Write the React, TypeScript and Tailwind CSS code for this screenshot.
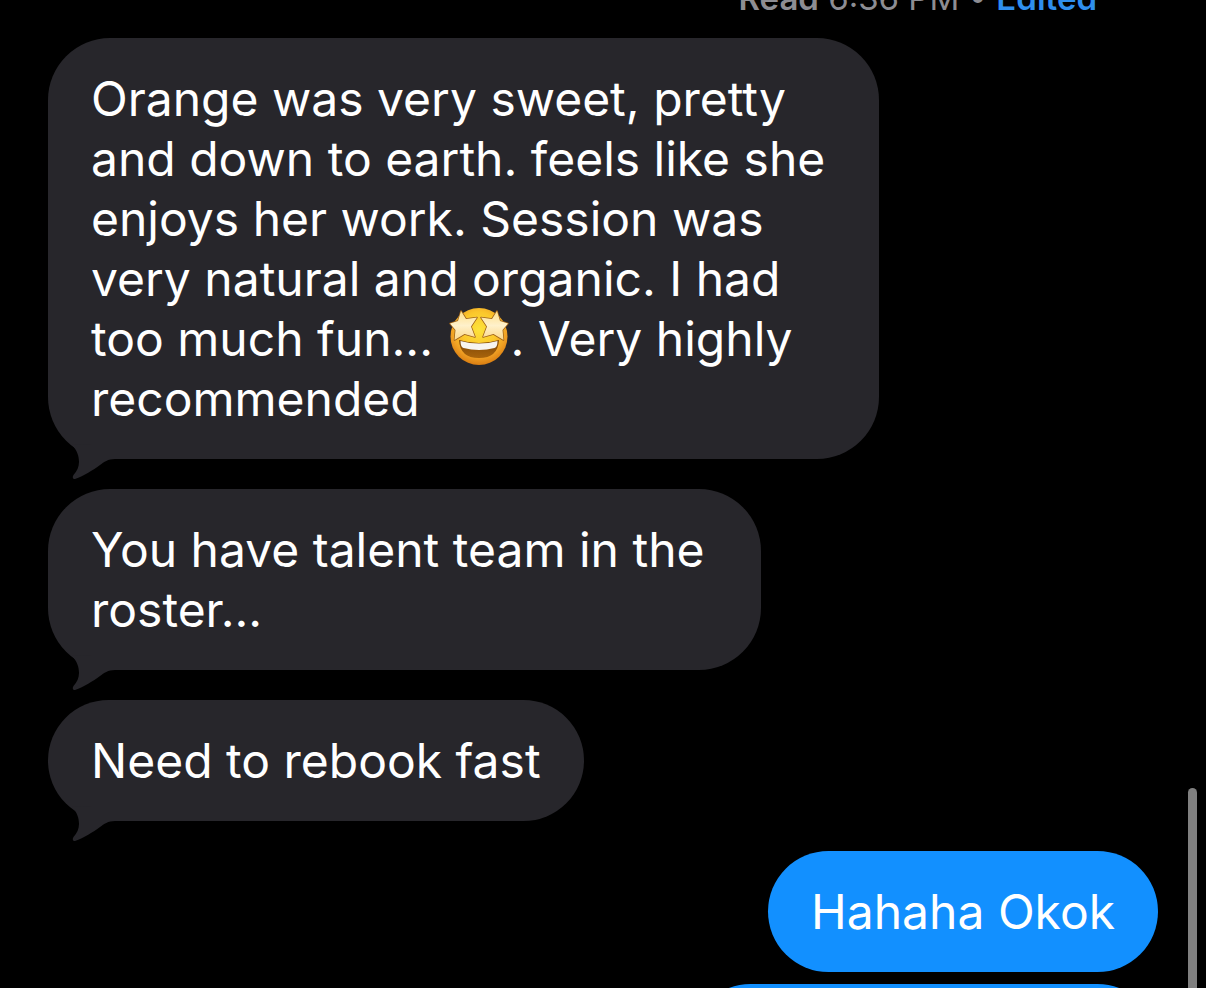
import type { ReactNode } from "react";
import clsx from "clsx";

const StarEyes = () => (
    <svg
        viewBox="0 0 60 58"
        role="img"
        aria-label="Star-struck face"
        className="inline-block w-[60px] h-[58px] -mt-6 -mb-3 mx-0.5"
    >
        <defs>
            <radialGradient id="face" cx="50%" cy="38%" r="62%">
                <stop offset="0" stopColor="#fde33a" />
                <stop offset="0.5" stopColor="#fbc72c" />
                <stop offset="0.78" stopColor="#f0a024" />
                <stop offset="1" stopColor="#d97d12" />
            </radialGradient>
            <linearGradient id="star" x1="0" y1="0" x2="0" y2="1">
                <stop offset="0" stopColor="#ffe089" />
                <stop offset="0.5" stopColor="#fff1cb" />
                <stop offset="1" stopColor="#fbd88a" />
            </linearGradient>
            <linearGradient id="mouth" x1="0" y1="0" x2="0" y2="1">
                <stop offset="0" stopColor="#7a4406" />
                <stop offset="1" stopColor="#a8640c" />
            </linearGradient>
        </defs>
        <circle cx="30" cy="28.500" r="28.500" fill="url(#face)" />
        <path d="M10 32Q30 38 50 32Q49 50 30 50Q11 50 10 32Z" fill="url(#mouth)" />
        <path
            d="M11.500 33Q30 38 48.500 33Q48.500 39 45.500 40Q30 44 14.500 40Q11.500 39 11.500 33Z"
            fill="#f7f5f0"
        />
        <g fill="url(#star)" strokeLinejoin="round">
            <g stroke="#9c5f16" strokeWidth="1.500">
                <path d="M12 3L17 11L28 9.500L22 18.500L26 29L15.500 26L5.500 32L6.500 22L1 15.500L9 13Z" />
                <path d="M48 3L43 11L32 9.500L38 18.500L34 29L44.500 26L54.500 32L53.500 22L59 15.500L51 13Z" />
            </g>
            <path d="M12 3L17 11L28 9.500L22 18.500L26 29L15.500 26L5.500 32L6.500 22L1 15.500L9 13Z" />
            <path d="M48 3L43 11L32 9.500L38 18.500L34 29L44.500 26L54.500 32L53.500 22L59 15.500L51 13Z" />
        </g>
    </svg>
);

const Tail = () => (
    <svg
        viewBox="0 0 46 36"
        aria-hidden="true"
        className="absolute left-6 -bottom-[21px] w-[46px] h-9"
    >
        <path
            d="M0 1C5 6 7 12 7 18C7 23 5 27 1.500 31C0 33.500 1 35.500 3 35C12 32 21 26 28 21C32 18 36 15 43 15L43 0L20 0Z"
            fill="#27262b"
        />
    </svg>
);

type BubbleProps = {
    sent?: boolean;
    className?: string;
    children?: ReactNode;
};

const Bubble = ({ sent, className, children }: BubbleProps) => (
    <li
        className={clsx(
            "relative rounded-[62px] px-[43px] pt-[31px] pb-[30px] text-5xl leading-[60px] text-white",
            sent ? "self-end bg-[#1290ff]" : "self-start bg-[#27262b]",
            className
        )}
    >
        {children}
        {!sent && <Tail />}
    </li>
);

const App = () => {
    return (
        <main className="relative h-screen overflow-hidden bg-black px-12 font-['Inter',sans-serif]">
            <p className="-mt-[22px] mr-[61px] text-right text-[33px] leading-[40px] text-[#8d8d93]">
                <span className="font-semibold">Read</span> 6:36 PM •{" "}
                <a href="#edited" className="font-semibold text-[#2f8fee]">
                    Edited
                </a>
            </p>

            <ul className="mt-5 flex flex-col gap-[30px]">
                <Bubble className="max-w-[831px]">
                    Orange was very sweet, pretty and down to earth. feels like she
                    enjoys her work. Session was very natural and organic. I had
                    too much fun... <StarEyes />. Very highly recommended
                </Bubble>
                <Bubble className="max-w-[713px]">
                    You have talent team in the roster...
                </Bubble>
                <Bubble>Need to rebook fast</Bubble>
                <Bubble sent>Hahaha Okok</Bubble>
                {/* next message, only its top edge is scrolled into view */}
                <Bubble sent className="-mt-[18px] h-[121px] w-[468px]" />
            </ul>

            <div className="absolute right-[9px] top-[788px] -bottom-3 w-[9px] rounded-full bg-[#808080]" />
        </main>
    );
};

export default App;
